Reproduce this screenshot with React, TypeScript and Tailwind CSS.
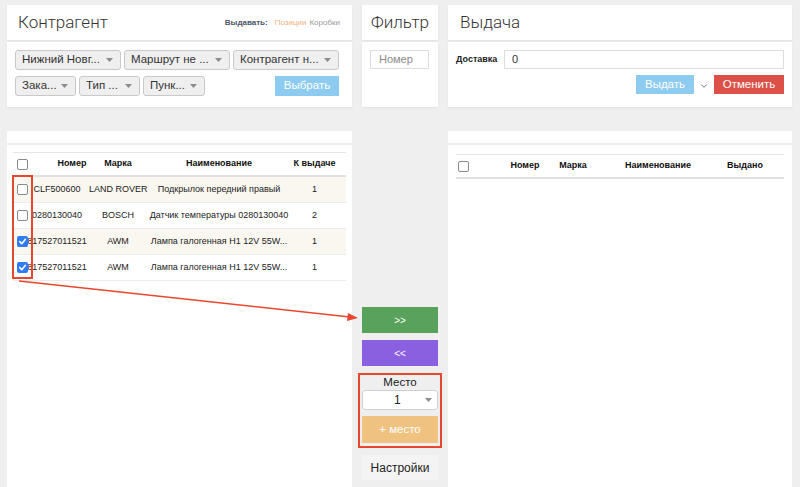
import { ChevronDown } from "lucide-react";

const font = { fontFamily: '"Liberation Sans", Arial, sans-serif' };

type Row = { num: string; brand: string; name: string; qty: string; checked: boolean; striped: boolean };

const rows: Row[] = [
  { num: "CLF500600", brand: "LAND ROVER", name: "Подкрылок передний правый", qty: "1", checked: false, striped: true },
  { num: "0280130040", brand: "BOSCH", name: "Датчик температуры 0280130040", qty: "2", checked: false, striped: false },
  { num: "817527011521", brand: "AWM", name: "Лампа галогенная H1 12V 55W...", qty: "1", checked: true, striped: true },
  { num: "817527011521", brand: "AWM", name: "Лампа галогенная H1 12V 55W...", qty: "1", checked: true, striped: false },
];

const Check = ({ checked = false }: { checked?: boolean }) =>
  checked ? (
    <span className="relative z-10 flex h-[11px] w-[11px] items-center justify-center rounded-[2px] bg-[#2f7bf5]">
      <svg width="9" height="9" viewBox="0 0 10 10">
        <path d="M2 5.2 L4.2 7.4 L8.2 2.6" stroke="white" strokeWidth="1.8" fill="none" strokeLinecap="round" strokeLinejoin="round" />
      </svg>
    </span>
  ) : (
    <span className="block h-[11px] w-[11px] rounded-[2px] border border-[#8a8a8a] bg-white" />
  );

const Caret = () => (
  <svg width="7" height="4" viewBox="0 0 7 4" className="shrink-0">
    <path d="M0 0 L7 0 L3.5 4 Z" fill="#8c8c8c" />
  </svg>
);

const Drop = ({ label, w }: { label: string; w: string }) => (
  <div className={`${w} flex h-[20px] items-center justify-between rounded-[3px] border border-[#c9c9c9] bg-[#efefef] pl-[6px] pr-[7px] text-[11.5px] text-[#333]`}>
    <span className="whitespace-nowrap">{label}</span>
    <Caret />
  </div>
);

const PanelHead = ({ children, className = "" }: { children: React.ReactNode; className?: string }) => (
  <div className={`flex h-[35px] items-center bg-white shadow-[0_1px_2px_rgba(0,0,0,0.06)] ${className}`}>{children}</div>
);

const Title = ({ children }: { children: React.ReactNode }) => (
  <span className="text-[17px] font-light text-[#333]" style={{ fontFamily: "Roboto, Arial, sans-serif" }}>
    {children}
  </span>
);

export default function App() {
  return (
    <div className="relative h-[487px] w-[800px] overflow-hidden bg-[#efefef] pl-[7px] pt-[5px]" style={font}>
      {/* top row */}
      <div className="flex gap-[10px]">
        {/* Контрагент */}
        <div className="flex w-[345px] flex-col gap-[2px]">
          <PanelHead className="justify-between pl-[11px] pr-[12px]">
            <Title>Контрагент</Title>
            <div className="flex items-center gap-[3px] text-[8px]">
              <span className="mr-[4px] font-bold text-[#4c5566]">Выдавать:</span>
              <span className="text-[#f3b27d]">Позиции</span>
              <span className="text-[#9a9a9a]">Коробки</span>
            </div>
          </PanelHead>
          <div className="flex h-[65px] flex-col gap-[6px] bg-white px-[8px] pt-[8px] shadow-[0_1px_2px_rgba(0,0,0,0.06)]">
            <div className="flex gap-[3px]">
              <Drop label="Нижний Новг..." w="w-[106px]" />
              <Drop label="Маршрут не ..." w="w-[106px]" />
              <Drop label="Контрагент н..." w="w-[106px]" />
            </div>
            <div className="flex gap-[3px]">
              <Drop label="Зака..." w="w-[61px]" />
              <Drop label="Тип ..." w="w-[61px]" />
              <Drop label="Пунк..." w="w-[62px]" />
              <div className="ml-auto mr-[5px] flex h-[20px] w-[64px] items-center justify-center bg-[#8ecbf1] text-[11.5px] text-white">
                Выбрать
              </div>
            </div>
          </div>
        </div>

        {/* Фильтр */}
        <div className="flex w-[76px] flex-col gap-[2px]">
          <PanelHead className="justify-center">
            <Title>Фильтр</Title>
          </PanelHead>
          <div className="h-[65px] bg-white px-[8px] pt-[8px] shadow-[0_1px_2px_rgba(0,0,0,0.06)]">
            <div className="flex h-[19px] w-[59px] items-center border border-[#dedede] pl-[8px] text-[11px] text-[#8a8a8a]">
              Номер
            </div>
          </div>
        </div>

        {/* Выдача */}
        <div className="flex w-[344px] flex-col gap-[2px]">
          <PanelHead className="pl-[12px]">
            <Title>Выдача</Title>
          </PanelHead>
          <div className="flex h-[65px] flex-col bg-white px-[8px] pt-[8px] shadow-[0_1px_2px_rgba(0,0,0,0.06)]">
            <div className="flex items-start">
              <span className="mt-[3px] w-[48px] text-[9px] font-bold text-[#222]">Доставка</span>
              <div className="flex h-[19px] flex-1 items-center border border-[#dedede] pl-[7px] text-[11px] text-[#333]">0</div>
            </div>
            <div className="mt-[6px] flex items-center justify-end gap-[3px]">
              <div className="flex h-[19px] w-[58px] items-center justify-center bg-[#8ecbf1] text-[11.5px] text-white">Выдать</div>
              <ChevronDown size={10} strokeWidth={2} className="mx-[2px] mt-[2px] text-[#555]" />
              <div className="flex h-[19px] w-[70px] items-center justify-center bg-[#dc5047] text-[11.5px] text-white">Отменить</div>
            </div>
          </div>
        </div>
      </div>

      {/* bottom row */}
      <div className="mt-[24px] flex gap-[10px]">
        {/* left table */}
        <div className="flex w-[345px] flex-col gap-[2px]">
          <div className="h-[12px] bg-white" />
          <div className="h-[360px] bg-white px-[6px] pt-[7px]">
            <div className="border-t border-[#e6e6e6]">
              <div className="flex h-[24px] items-center border-b-2 border-[#e0e0e0] text-[9px] font-bold text-[#111]">
                <div className="w-[20px] pl-[4px]">
                  <Check />
                </div>
                <div className="w-[56px] pl-[22px] text-center">Номер</div>
                <div className="w-[58px] text-center">Марка</div>
                <div className="w-[144px] text-center">Наименование</div>
                <div className="w-[47px] whitespace-nowrap text-center">К выдаче</div>
              </div>
              {rows.map((r, i) => (
                <div
                  key={i}
                  className={`flex h-[26px] items-center border-b border-[#ececec] text-[9px] text-[#222] ${r.striped ? "bg-[#f9f7ef]" : "bg-white"}`}
                >
                  <div className="w-[20px] pl-[4px]">
                    <Check checked={r.checked} />
                  </div>
                  <div className="flex w-[56px] justify-center whitespace-nowrap pr-[8px]">
                    <span>{r.num}</span>
                  </div>
                  <div className="w-[58px] whitespace-nowrap text-center">{r.brand}</div>
                  <div className="w-[144px] whitespace-nowrap text-center">{r.name}</div>
                  <div className="w-[47px] text-center">{r.qty}</div>
                </div>
              ))}
            </div>
          </div>
        </div>

        {/* middle controls */}
        <div className="flex w-[76px] flex-col pt-[176px]">
          <div className="flex h-[26px] items-center justify-center bg-[#58a25b] text-[10px] text-white">&gt;&gt;</div>
          <div className="mt-[7px] flex h-[26px] items-center justify-center bg-[#8b60e0] text-[10px] text-white">&lt;&lt;</div>
          <div className="-mx-[4px] mt-[7px] flex h-[75px] flex-col border-2 border-[#e8472f] px-[2px]">
            <div className="mt-[1px] text-center text-[11.5px] leading-[13px] text-[#222]">Место</div>
            <div className="mt-[1px] flex h-[20px] items-center justify-between rounded-[3px] border border-[#d0d0d0] bg-white pl-[31px] pr-[5px] text-[12px] text-[#222]">
              <span>1</span>
              <Caret />
            </div>
            <div className="mt-[6px] flex h-[27px] items-center justify-center bg-[#f0c27f] text-[11.5px] text-white">+ место</div>
          </div>
          <div className="mt-[7px] flex h-[25px] items-center justify-center bg-[#f4f4f4] text-[12px] text-[#222]">Настройки</div>
        </div>

        {/* right table */}
        <div className="flex w-[344px] flex-col gap-[2px]">
          <div className="h-[12px] bg-white" />
          <div className="h-[360px] bg-white px-[8px] pt-[9px]">
            <div className="flex h-[25px] items-center border-y border-b-2 border-t-[#e6e6e6] border-b-[#e0e0e0] text-[9px] font-bold text-[#111]">
              <div className="w-[48px] pl-[2px]">
                <Check />
              </div>
              <div className="w-[42px] text-center">Номер</div>
              <div className="w-[54px] text-center">Марка</div>
              <div className="w-[116px] text-center">Наименование</div>
              <div className="w-[58px] text-center">Выдано</div>
            </div>
          </div>
        </div>
      </div>

      {/* annotations */}
      <div className="pointer-events-none absolute left-[12px] top-[175px] h-[104px] w-[21px] border-2 border-[#e8472f]" />
      <svg className="pointer-events-none absolute left-0 top-0" width="800" height="487">
        <line x1="19" y1="281" x2="350" y2="317" stroke="#e8472f" strokeWidth="1.5" />
        <path d="M358 318 L348 313 L347 321 Z" fill="#e8472f" />
      </svg>
    </div>
  );
}
